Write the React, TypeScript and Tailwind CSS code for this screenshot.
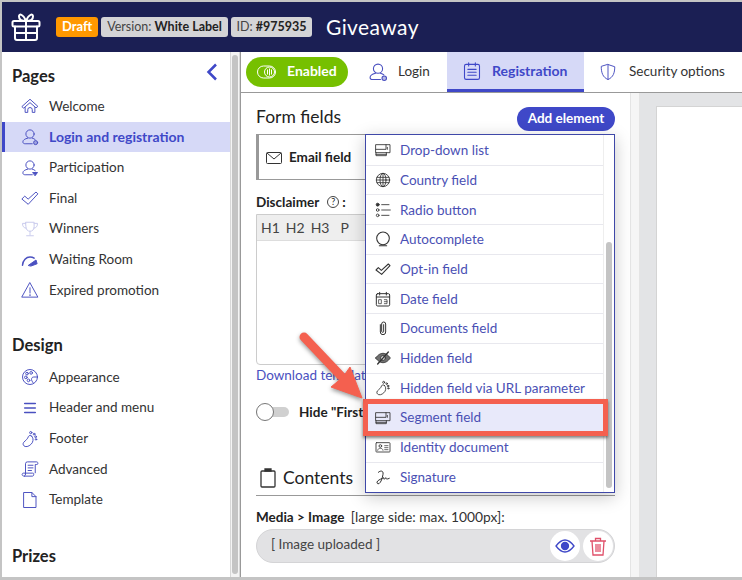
import React from 'react';

const S = ({ children, size = 18, vb = 24, className = '' }: { children: React.ReactNode; size?: number; vb?: number; className?: string }) => (
  <svg width={size} height={size} viewBox={`0 0 ${vb} ${vb}`} fill="none" stroke="currentColor" strokeWidth={1.3} strokeLinecap="round" strokeLinejoin="round" className={`shrink-0 ${className}`}>
    {children}
  </svg>
);

const Gift = () => (
  <svg width="30" height="30" viewBox="0 0 30 30" fill="none" stroke="white" strokeWidth="2" strokeLinejoin="round" strokeLinecap="round" className="shrink-0">
    <rect x="1.500" y="9" width="27" height="5.500" rx="1.500" />
    <path d="M4 14.500V26a2 2 0 0 0 2 2h18a2 2 0 0 0 2-2V14.500M4 21h22M15 9v19" />
    <path d="M15 9C12 9 8 8 8 4.500C8 1.500 12 1.500 15 9ZM15 9C18 9 22 8 22 4.500C22 1.500 18 1.500 15 9Z" />
  </svg>
);

const UserBadge = ({ plus, size = 20 }: { plus?: boolean; size?: number }) => (
  <S size={size}>
    <circle cx="12" cy="8" r="5.500" />
    <path d="M9 13.500C5 14.500 2.500 16 2.500 18.500c0 2 1.500 2.500 3 2.500H15M15 13.500c1.500.4 3 1 4 2" />
    {plus ? <path d="M16 18h6l-3 4z" fill="currentColor" /> : <circle cx="19.500" cy="19.500" r="2.700" fill="currentColor" fillOpacity="0.4" />}
  </S>
);

const pageIcons: Record<string, React.ReactNode> = {
  Welcome: (
    <S>
      <path d="M1.500 12.500 12 3l10.500 9.500-2.500 2-8-7-8 7zM5.500 14v6.500H9V17a3 3 0 0 1 6 0v3.500h3.500V14" />
    </S>
  ),
  'Login and registration': <UserBadge size={18} />,
  Participation: <UserBadge plus size={18} />,
  Final: (
    <S>
      <path d="M1.500 13 5 9.500l4.500 4L20 4l2.500 2.500L10 20z" />
    </S>
  ),
  Winners: (
    <S className="opacity-30">
      <path d="M6.500 3h11v6c0 4-2.500 6-5.500 6s-5.500-2-5.500-6zM6.500 4.500H2c0 4 1.500 6 5 6.500M17.500 4.500H22c0 4-1.500 6-5 6.500M12 15v5M7.500 21h9" />
    </S>
  ),
  'Waiting Room': (
    <S>
      <path d="M2 19C2.500 12 7 8 12 8c2 0 4 .5 5.500 1.500" strokeWidth="2" />
      <path d="M10 19 20 12l1.500 5-8 3z" fill="currentColor" />
    </S>
  ),
  'Expired promotion': (
    <S>
      <path d="M12 2.500 22.500 21.500h-21zM12 9v7" />
      <path d="M12 18.500v.5" strokeWidth="2" />
    </S>
  ),
  Appearance: (
    <S>
      <circle cx="12" cy="12" r="10" />
      <circle cx="8" cy="7.500" r="1.800" />
      <circle cx="13.500" cy="6.500" r="1.800" />
      <circle cx="6.500" cy="12.500" r="1.800" />
      <circle cx="10" cy="16.500" r="1.800" />
      <path d="M22 12h-5c-2 0-3 1.500-3 3s1 3 2 4.500" />
    </S>
  ),
  'Header and menu': (
    <S>
      <path d="M5 6h14M5 12h14M5 18h14" strokeWidth="2.200" />
    </S>
  ),
  Footer: (
    <S>
      <path d="M14 8c2 2 3 5 1 9-2 3-6 6-9.500 5C3 21 2 19 3.500 16.500 6 14 9 12 10 8.500c.7-1.500 3-1.500 4-.5z" />
      <circle cx="13" cy="3.500" r="1.500" />
      <circle cx="17.500" cy="5.500" r="1.200" />
      <circle cx="19.500" cy="9" r="1.200" />
      <circle cx="20" cy="12.500" r="1" />
    </S>
  ),
  Advanced: (
    <S>
      <path d="M6 19V5a2.500 2.500 0 0 1 2.500-2.500H21c1 0 1.500 1 1.500 2s-.5 1.500-1.500 1.500h-2V17M6 19c0 1.500-1 2.500-2 2.500h11c1.500 0 2-1 2-2.500s-.5-1.500-1.500-1.500H3c-1 0-1.500 1-1.500 2S2.500 21.500 4 21.500M9.500 7H16M9.500 10.500H16M9.500 14H14" />
    </S>
  ),
  Template: (
    <S>
      <path d="M4 2h10.500L20 7.500V22H4zM14.500 2v5.500H20" />
    </S>
  ),
};

const fieldIcons: Record<string, React.ReactNode> = {
  dropdown: (
    <>
      <rect x="1.500" y="4" width="21" height="12" />
      <path d="M1.500 11h15V4M18.500 8v3" />
      <path d="M1.500 16v4.500H17V16M1.500 18.500H17" />
    </>
  ),
  globe: (
    <>
      <circle cx="12" cy="12" r="10" />
      <ellipse cx="12" cy="12" rx="4.500" ry="10" />
      <path d="M12 2v20M3 8h18M3 16h18M2 12h20" />
    </>
  ),
  radio: (
    <>
      <circle cx="4" cy="4" r="2.200" fill="currentColor" />
      <circle cx="4" cy="12" r="2" />
      <circle cx="4" cy="20" r="2" />
      <path d="M10 4h11M10 12h13M10 20h11" />
    </>
  ),
  ball: (
    <>
      <circle cx="12" cy="11" r="9.500" strokeWidth="1.600" />
      <path d="M6.500 22h11" strokeWidth="1.600" />
    </>
  ),
  check: <path d="M1.500 13.500 5 10l4.500 4L20 4.500l2.500 2.500L10 20z" strokeWidth="1.600" />,
  date: (
    <>
      <rect x="2" y="4" width="20" height="18.500" rx="2" strokeWidth="1.500" />
      <path d="M2 9h20M7 2v4M17 2v4" strokeWidth="1.500" />
      <path d="M6 13h3.500v6H6zM14 13h4v6h-4M14 16h4" strokeWidth="1.100" />
    </>
  ),
  clip: <path d="M8 7v11a4 4 0 0 0 8 0V6a3 3 0 0 0-6 0v11a1.500 1.500 0 0 0 3 0V7" strokeWidth="1.500" />,
  eyeoff: (
    <>
      <path d="M1 12C5 6.500 8.500 5 12 5s7 1.500 11 7c-4 5.500-7.500 7-11 7s-7-1.500-11-7z" fill="currentColor" fillOpacity="0.7" />
      <circle cx="12" cy="12" r="3.500" fill="white" />
      <path d="M20 3 4 21" strokeWidth="2" />
    </>
  ),
  foot: (
    <>
      <path d="M14 8c2 2 3 5 1 9-2 3-6 6-9.500 5C3 21 2 19 3.500 16.500 6 14 9 12 10 8.500c.7-1.500 3-1.500 4-.5z" />
      <circle cx="13" cy="3.500" r="1.500" />
      <circle cx="17.500" cy="5.500" r="1.200" />
      <circle cx="19.500" cy="9" r="1.200" />
      <circle cx="20" cy="12.500" r="1" />
    </>
  ),
  id: (
    <>
      <rect x="1.500" y="5.500" width="21" height="14" rx="1" />
      <circle cx="8" cy="10.500" r="2" />
      <path d="M4 17c.5-2.500 2-3 4-3s3.500.500 4 3M14.500 10h5M14.500 13h5M14.500 16h5" strokeWidth="1.100" />
    </>
  ),
  sign: <path d="M5 5c3-3 8-3 7 3-1 6-3 12-6 14-3 1-4-2-2-4 2-2 7-4 9-5 0 2 0 3 1.500 2 1-1 1-2 2-2 0 2 1 3 5 1" strokeWidth="1.500" />,
};

const fields = [
  ['Drop-down list', 'dropdown'],
  ['Country field', 'globe'],
  ['Radio button', 'radio'],
  ['Autocomplete', 'ball'],
  ['Opt-in field', 'check'],
  ['Date field', 'date'],
  ['Documents field', 'clip'],
  ['Hidden field', 'eyeoff'],
  ['Hidden field via URL parameter', 'foot'],
  ['Segment field', 'dropdown'],
  ['Identity document', 'id'],
  ['Signature', 'sign'],
];

const SideItem = ({ name, active }: { name: string; active?: boolean }) => (
  <div className={`h-[30.7px] flex items-center pl-[16px] border-l-[3px] gap-[10px] ${active ? 'bg-[#d6d9f7] border-[#3f48c8] text-[#3f48c8] font-bold' : 'border-transparent text-[#333]'}`}>
    <span className="text-[#4a50c0] flex">{pageIcons[name]}</span>
    <span className={active ? 'pb-[2px] text-[14px]' : 'pb-[1px] text-[13.5px]'}>{name}</span>
  </div>
);

export default function App() {
  return (
    <div className="relative w-[742px] h-[580px] overflow-hidden bg-[#c4c4c4] pt-[2px] pl-[2px] pb-[3px] flex flex-col text-[#222]" style={{ fontFamily: 'Lato, "Noto Sans", sans-serif' }}>
      {/* top bar */}
      <header className="h-[50px] shrink-0 bg-[#1b1f54] flex items-center pl-[9px]">
        <Gift />
        <span className="ml-[15px] h-[20px] w-[42px] rounded-[3px] bg-[#ff9800] text-white text-[13px] font-bold flex items-center justify-center">Draft</span>
        <span className="ml-[3px] h-[20px] w-[127px] rounded-[3px] bg-[#d4d4d6] text-[#444] text-[12.5px] flex items-center justify-center whitespace-nowrap">
          Version:&nbsp;<b className="text-[#222]">White Label</b>
        </span>
        <span className="ml-[3px] h-[20px] w-[81px] rounded-[3px] bg-[#d4d4d6] text-[#444] text-[12.5px] flex items-center justify-center whitespace-nowrap">
          ID:&nbsp;<b className="text-[#222]">#975935</b>
        </span>
        <span className="ml-[14px] text-white text-[21px] tracking-[0.4px]">Giveaway</span>
      </header>

      <div className="flex-1 flex min-h-0">
        {/* sidebar */}
        <aside className="w-[228px] shrink-0 bg-white relative overflow-hidden">
          <div className="h-[39px] flex items-end pl-[10px] pb-[2px] text-[16.5px] font-bold text-[#222]">Pages</div>
          <svg width="12" height="18" viewBox="0 0 12 18" fill="none" stroke="#3f48c8" strokeWidth="2.500" className="absolute top-[11px] left-[204px]">
            <path d="M10 1.500 2.500 9l7.500 7.500" />
          </svg>
          <SideItem name="Welcome" />
          <SideItem name="Login and registration" active />
          <SideItem name="Participation" />
          <SideItem name="Final" />
          <SideItem name="Winners" />
          <SideItem name="Waiting Room" />
          <SideItem name="Expired promotion" />
          <div className="h-[34px] mt-[23px] -mb-[1px] flex items-center pl-[10px] text-[16.5px] font-bold">Design</div>
          <SideItem name="Appearance" />
          <SideItem name="Header and menu" />
          <SideItem name="Footer" />
          <SideItem name="Advanced" />
          <SideItem name="Template" />
          <div className="h-[34px] mt-[24px] flex items-center pl-[10px] text-[16.5px] font-bold">Prizes</div>
        </aside>

        {/* sidebar scrollbar */}
        <div className="w-[10px] shrink-0 bg-[#f4f4f4] border-x border-[#d8d8d8] py-[3px] px-[1px]">
          <div className="h-full rounded-[4px] bg-[#c4c4c4]" />
        </div>

        {/* main */}
        <main className="flex-1 min-w-0 bg-white flex flex-col border-l border-[#999]">
          <nav className="h-[41px] shrink-0 flex items-stretch border-b border-[#999] text-[13.5px]">
            <div className="ml-[5px] mt-[5px] h-[30px] w-[102px] rounded-[15px] bg-[#76c000] text-white font-bold flex items-center pl-[11px] gap-[10px] text-[14px]">
              <svg width="20" height="14" viewBox="0 0 20 14" fill="none" stroke="white" className="shrink-0">
                <rect x="0.500" y="1" width="18" height="12" rx="6" />
                <circle cx="12.500" cy="7" r="5" />
                <path d="M10.500 4.500v5M12.500 3.500v7M14.500 4.500v5" />
              </svg>
              <span className="pb-[3px]">Enabled</span>
            </div>
            <div className="ml-[20px] flex items-center gap-[10px] w-[79px] text-[#333]">
              <span className="text-[#4a50c0] flex"><UserBadge /></span>
              <span className="pb-[2px]">Login</span>
            </div>
            <div className="flex items-center w-[137px] pl-[15px] gap-[10px] bg-[#d6d9f7] border-b-[3px] border-[#3f48c8] text-[#3f48c8] font-bold text-[14px]">
              <S size={20}>
                <rect x="3" y="4" width="18" height="18" rx="2" />
                <path d="M8 2v4M16 2v4M7 10h10M7 13.500h10M7 17h10" />
              </S>
              Registration
            </div>
            <div className="ml-[15px] flex items-center gap-[12px] text-[#333] whitespace-nowrap">
              <span className="text-[#4a50c0] flex">
                <S size={18}>
                  <path d="M12 2 21 5c0 8-2 14-9 17C5 19 3 13 3 5zM12 2v20" />
                </S>
              </span>
              <span className="pb-[2px]">Security options</span>
            </div>
          </nav>

          <div className="flex-1 flex min-h-0">
            {/* form column */}
            <section className="w-[389px] shrink-0 pl-[15px] pr-[15px] flex flex-col">
              <div className="h-[34px] mt-[7px] flex items-center justify-between">
                <span className="text-[17.5px]">Form fields</span>
                <span className="mt-[4px] h-[24px] w-[98px] pb-[2px] rounded-[12px] bg-[#3f48c8] text-white text-[13.5px] font-bold flex items-center justify-center">Add element</span>
              </div>
              <div className="h-[46px] border border-[#999] border-l-[3px] flex items-center pl-[7px] gap-[7px] text-[13.5px] font-bold">
                <svg width="16" height="12" viewBox="0 0 16 12" fill="none" stroke="#333" className="shrink-0 mt-[2px]">
                  <rect x="0.500" y="0.500" width="15" height="11" rx="1" />
                  <path d="m1 1 7 6 7-6" />
                </svg>
                <span>Email field</span>
              </div>
              <div className="h-[34px] flex items-end pb-[2px] text-[13.5px] font-bold gap-[8px]">
                Disclaimer
                <span className="flex items-center gap-[3px]">
                  <span className="w-[12px] h-[12px] rounded-full border border-[#444] text-[9px] font-normal flex items-center justify-center">?</span>:
                </span>
              </div>
              <div className="h-[151px] rounded-b-[4px] border border-[#ccc] flex flex-col">
                <div className="h-[26px] bg-[#eeeeee] border-b border-[#ddd] flex items-center pl-[4px] text-[14px] text-[#444] gap-[6px] whitespace-nowrap">
                  <span>H1</span><span>H2</span><span>H3</span><span className="ml-[5px]">P</span><span className="ml-[5px] font-bold">⋮</span>
                </div>
              </div>
              <div className="text-[13.5px] text-[#4a50c0]">Download template</div>
              <div className="mt-[16px] h-[22px] w-[109px] overflow-hidden flex items-center gap-[10px] text-[13.5px] font-bold whitespace-nowrap">
                <span className="relative shrink-0 w-[33px] h-[10px] rounded-full bg-[#d0d0d0] flex items-center">
                  <span className="absolute left-0 w-[18px] h-[18px] rounded-full bg-white border border-[#777]" />
                </span>
                Hide "First
              </div>
              <div className="mt-[40px] h-[33px] flex items-center gap-[7px] border-b border-[#999] text-[17.5px] pb-[2px]">
                <svg width="16" height="20" viewBox="0 0 16 20" fill="none" stroke="#333" strokeWidth="1.300" className="ml-[4px]">
                  <rect x="1" y="3" width="14" height="16" rx="1" />
                  <path d="M5 3V1h6v2z" fill="#333" />
                </svg>
                Contents
              </div>
              <div className="mt-[11px] text-[13.5px] whitespace-nowrap">
                <b>Media &gt; Image</b> <span className="ml-[3px] text-[13.8px] text-[#333]">[large side: max. 1000px]:</span>
              </div>
              <div className="mt-[1px] h-[34px] rounded-[17px] bg-[#e2e2e4] border border-[#d4d4d6] flex items-center pl-[14px] pr-[1px] text-[13.5px] text-[#444]">
                <span className="flex-1 pb-[3px]">[ Image uploaded ]</span>
                <span className="w-[30px] h-[30px] rounded-full bg-white flex items-center justify-center text-[#3f48c8]">
                  <svg width="20" height="14" viewBox="0 0 20 14" fill="none" stroke="currentColor" strokeWidth="1.300">
                    <path d="M1 7c3-4 6-6 9-6s6 2 9 6c-3 4-6 6-9 6S4 11 1 7z" />
                    <circle cx="10" cy="7" r="3.500" fill="currentColor" />
                  </svg>
                </span>
                <span className="ml-[3px] w-[30px] h-[30px] rounded-full bg-white flex items-center justify-center text-[#e0506a]">
                  <svg width="18" height="20" viewBox="0 0 18 20" fill="none" stroke="currentColor" strokeWidth="1.300">
                    <path d="M1 5h16M3 5l1 14h10l1-14M6.500 5V2.500h5V5M7 8v8M9 8v8M11 8v8" />
                  </svg>
                </span>
              </div>
            </section>

            {/* preview */}
            <div className="w-[10px] shrink-0 bg-[#f5f5f5] border-x border-[#e4e4e4]" />
            <div className="flex-1 bg-[#e3e4e6] pt-[13px] pl-[16px]">
              <div className="h-full bg-white border-l border-t border-[#d4d4d4]" />
            </div>
          </div>
        </main>
      </div>

      {/* add element menu */}
      <div className="absolute left-[365px] top-[134px] w-[250px] h-[359px] bg-white border border-[#3f48a8] shadow-[0_4px_16px_rgba(0,0,0,0.22)] flex">
        <ul className="w-[238px] border-r border-[#eee] pt-[1px]">
          {fields.map(([label, icon]) => (
            <li key={label} className="relative h-[29.7px] flex items-center pl-[9px] border-b border-[#e8e8ee] last:border-b-0 text-[13.5px] text-[#4a50b4] whitespace-nowrap">
              {label === 'Segment field' && (
                <span className="absolute -left-[3px] -right-[5px] -top-[4px] -bottom-[4px] border-[5px] border-[#f4604f] bg-[#e8e9fa] shadow-[0_2px_3px_rgba(0,0,0,0.5)]" />
              )}
              <span className="relative flex text-[#333]"><S size={16}>{fieldIcons[icon]}</S></span>
              <span className="relative ml-[9px]">{label}</span>
            </li>
          ))}
        </ul>
        <div className="flex-1 pl-[2px] pr-[2px] pt-[107px] pb-[4px]">
          <div className="h-full rounded-[3px] bg-[#c4c4c4]" />
        </div>
      </div>

      {/* annotation arrow */}
      <svg width="80" height="80" viewBox="0 0 80 80" className="absolute left-[295px] top-[330px]" style={{ filter: 'drop-shadow(0 2px 2px rgba(0,0,0,0.4))' }}>
        <path d="M9 7 L46 46" stroke="#f4604f" strokeWidth="9" strokeLinecap="round" />
        <path d="M67 68 L36 57 L48 47 L55 37 Z" fill="#f4604f" stroke="#f4604f" strokeWidth="1" strokeLinejoin="round" />
      </svg>
    </div>
  );
}
